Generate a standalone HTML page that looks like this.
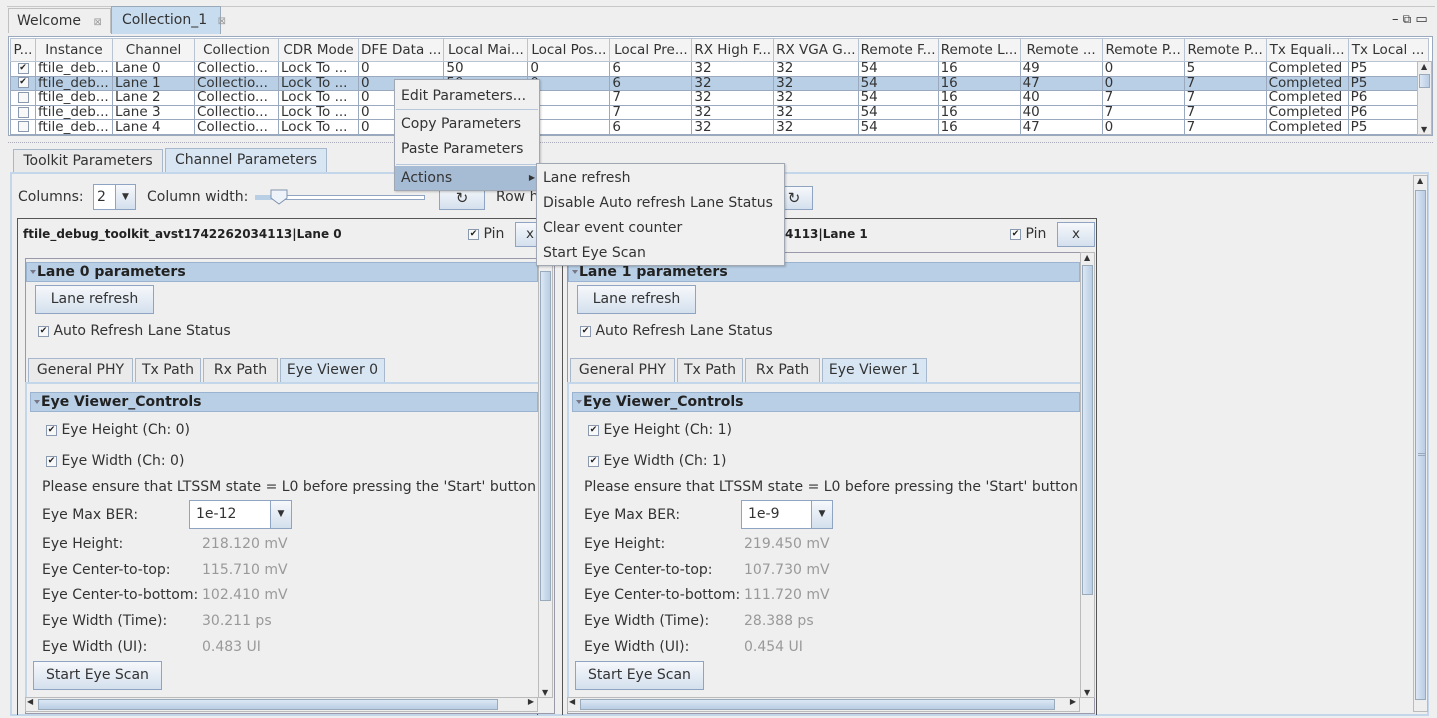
<!DOCTYPE html>
<html><head><meta charset="utf-8"><style>
*{box-sizing:border-box}
body{margin:0;width:1437px;height:718px;background:#efefef;font-family:"DejaVu Sans","Liberation Sans",sans-serif;font-size:13.5px;color:#333;position:relative;overflow:hidden}
.a{position:absolute;white-space:nowrap}
table{border-collapse:collapse;table-layout:fixed;font-size:13.5px}
td{border:1px solid #9aa9bd;padding:0 2px;height:14.6px;line-height:13px;overflow:hidden;white-space:nowrap;background:#fff;color:#333}
th{border:1px solid #b8c4d2;font-weight:normal;height:23px;background:#f4f4f4;overflow:hidden;white-space:nowrap;padding:0 2px}
tr.s td{background:#b8cfe6}
.cb{display:inline-block;width:11px;height:11px;border:1px solid #8a99ad;background:#f8f8f8;font-size:9px;line-height:9px;text-align:center;vertical-align:middle;color:#222}
.btn{position:absolute;border:1px solid #8ea4c2;background:linear-gradient(#f6f8fb,#d4e0ee);text-align:center;color:#333}
.bar{position:absolute;background:#b8cfe6;border:1px solid #9ab3d0;font-weight:bold;color:#222;padding-left:10px;line-height:18px}
.bar:before{content:"";position:absolute;left:3px;top:7px;border:3px solid transparent;border-top:4px solid #778}
.tab{position:absolute;border:1px solid #a8b8cc;border-bottom:none;background:#eaeaea;text-align:center;line-height:22px}
.tab.on{background:#d8e6f4}
.vs{position:absolute;width:15px;background:#eee;border:1px solid #bbb}
.thumb{position:absolute;left:1px;right:1px;background:linear-gradient(90deg,#dce7f4,#b9cde4);border:1px solid #9ab}
.lbl{position:absolute;white-space:nowrap}
.g{color:#999}
.menu{position:absolute;background:#f0f0f0;border:1px solid #a0a8b4;box-shadow:1px 1px 2px rgba(0,0,0,.2)}
.mi{position:absolute;left:0;right:0;padding-left:6px;line-height:24px;font-size:14px}
</style></head><body>
<!-- top tabs -->
<div class="a" style="left:7px;top:6px;width:1428px;height:28px;border-top:1px solid #c8c8c8"></div>
<div class="a" style="left:8px;top:8px;width:103px;height:25px;border:1px solid #c0c0c0;border-bottom:none;line-height:24px;padding-left:8px;font-size:14px">Welcome <span style="font-size:10px;color:#999;margin-left:8px">⊠</span></div>
<div class="a" style="left:111px;top:6px;width:110px;height:28px;background:#c8dcef;border:1px solid #9ab;border-bottom:none;line-height:26px;padding-left:10px;font-size:14px">Collection_1 <span style="font-size:10px;color:#999;margin-left:6px">⊠</span></div>
<div class="a" style="left:1392px;top:12px;font-size:13px">– <span style="font-size:12px">⧉</span> ▭</div>
<!-- table -->
<div class="a" style="left:8px;top:36px;width:1425px;height:100px;border:1px solid #9aa9bd;background:#fff;overflow:hidden">
<table style="position:absolute;left:1px;top:1px">
<colgroup><col style="width:25px"><col style="width:77px"><col style="width:82px"><col style="width:84px"><col style="width:80px"><col style="width:80px"><col style="width:84px"><col style="width:82px"><col style="width:82px"><col style="width:81px"><col style="width:81px"><col style="width:80px"><col style="width:82px"><col style="width:82px"><col style="width:82px"><col style="width:82px"><col style="width:82px"><col style="width:80px"></colgroup>
<tr><th>P...</th><th>Instance</th><th>Channel</th><th>Collection</th><th>CDR Mode</th><th>DFE Data ...</th><th>Local Mai...</th><th>Local Pos...</th><th>Local Pre...</th><th>RX High F...</th><th>RX VGA G...</th><th>Remote F...</th><th>Remote L...</th><th>Remote ...</th><th>Remote P...</th><th>Remote P...</th><th>Tx Equali...</th><th>Tx Local ...</th></tr>
<tr><td style="text-align:center"><span class="cb">✔</span></td><td>ftile_deb...</td><td>Lane 0</td><td>Collectio...</td><td>Lock To ...</td><td>0</td><td>50</td><td>0</td><td>6</td><td>32</td><td>32</td><td>54</td><td>16</td><td>49</td><td>0</td><td>5</td><td>Completed</td><td>P5</td></tr>
<tr class="s"><td style="text-align:center"><span class="cb">✔</span></td><td>ftile_deb...</td><td>Lane 1</td><td>Collectio...</td><td>Lock To ...</td><td>0</td><td>50</td><td>0</td><td>6</td><td>32</td><td>32</td><td>54</td><td>16</td><td>47</td><td>0</td><td>7</td><td>Completed</td><td>P5</td></tr>
<tr><td style="text-align:center"><span class="cb"></span></td><td>ftile_deb...</td><td>Lane 2</td><td>Collectio...</td><td>Lock To ...</td><td>0</td><td>50</td><td>0</td><td>7</td><td>32</td><td>32</td><td>54</td><td>16</td><td>40</td><td>7</td><td>7</td><td>Completed</td><td>P6</td></tr>
<tr><td style="text-align:center"><span class="cb"></span></td><td>ftile_deb...</td><td>Lane 3</td><td>Collectio...</td><td>Lock To ...</td><td>0</td><td>50</td><td>0</td><td>7</td><td>32</td><td>32</td><td>54</td><td>16</td><td>40</td><td>7</td><td>7</td><td>Completed</td><td>P6</td></tr>
<tr><td style="text-align:center"><span class="cb"></span></td><td>ftile_deb...</td><td>Lane 4</td><td>Collectio...</td><td>Lock To ...</td><td>0</td><td>50</td><td>0</td><td>6</td><td>32</td><td>32</td><td>54</td><td>16</td><td>47</td><td>0</td><td>7</td><td>Completed</td><td>P5</td></tr>
</table>
<div class="vs" style="left:1408px;top:24px;height:74px"><div class="a" style="left:3px;top:0;font-size:8px">▲</div><div class="thumb" style="top:12px;height:14px"></div><div class="a" style="left:3px;bottom:0;font-size:8px">▼</div></div>
</div>
<div class="a" style="left:8px;top:142px;width:1425px;border-top:1px dotted #aab"></div>
<!-- lower tabs -->
<div class="tab" style="left:13px;top:149px;width:150px;font-size:14px">Toolkit Parameters</div>
<div class="tab on" style="left:165px;top:148px;width:162px;height:25px;font-size:14px">Channel Parameters</div>
<div class="a" style="left:10px;top:172px;width:1419px;height:544px;border:2px solid #c4d6ea"></div>
<div class="vs" style="left:1413px;top:175px;height:537px"><div class="a" style="left:3px;top:0;font-size:8px">▲</div><div class="thumb" style="top:14px;height:510px"><div class="a" style="left:2px;top:262px;width:8px;border-top:3px double #9ab"></div></div></div>
<div class="lbl" style="left:18px;top:189px;font-size:14px">Columns:</div>
<div class="a" style="left:93px;top:184px;width:43px;height:26px;border:1px solid #8ea4c2;background:#fff"><span style="position:absolute;left:3px;top:4px;font-size:14px">2</span><div class="a" style="left:21px;top:0;width:20px;height:24px;background:linear-gradient(#f6f8fb,#d4e0ee);border-left:1px solid #8ea4c2;text-align:center;font-size:9px;line-height:24px">▼</div></div>
<div class="lbl" style="left:147px;top:189px;font-size:14px">Column width:</div>
<div class="a" style="left:255px;top:195px;width:170px;height:5px;border:1px solid #8ea4c2;background:#fff"></div>
<div class="a" style="left:255px;top:195px;width:20px;height:5px;background:#b8cfe6"></div>
<svg class="a" style="left:270px;top:189px" width="18" height="16"><path d="M1 1H17V9L9 15L1 9Z" fill="#eef3f9" stroke="#8194ae"/></svg>
<div class="btn" style="left:439px;top:186px;width:46px;height:24px;font-size:15px;line-height:22px">↻</div>
<div class="lbl" style="left:496px;top:189px;font-size:14px">Row h</div>
<div class="btn" style="left:775px;top:186px;width:38px;height:24px;font-size:15px;line-height:22px">↻</div>

<!-- card 1 -->
<div class="a" style="left:17px;top:218px;width:521px;height:497px;border:1px solid #555;border-bottom:none"></div>
<div class="lbl" style="left:23px;top:227px;font-size:12px;font-weight:bold;color:#222">ftile_debug_toolkit_avst1742262034113|Lane 0</div>
<div class="lbl" style="left:468px;top:226px;font-size:14px"><span class="cb">✔</span> Pin</div>
<div class="btn" style="left:515px;top:222px;width:30px;height:25px;line-height:23px">x</div>
<div class="a" style="left:25px;top:258px;width:530px;height:456px;border:1px solid #99a;background:#efefef"></div>
<div class="bar" style="left:26px;top:262px;width:512px;height:20px;font-size:14px">Lane 0 parameters</div>
<div class="btn" style="left:35px;top:285px;width:119px;height:29px;line-height:27px;font-size:14px">Lane refresh</div>
<div class="lbl" style="left:38px;top:323px;font-size:14px"><span class="cb">✔</span> Auto Refresh Lane Status</div>
<div class="tab" style="left:28px;top:358px;width:105px;height:24px;font-size:14px">General PHY</div>
<div class="tab" style="left:135px;top:358px;width:66px;height:24px;font-size:14px">Tx Path</div>
<div class="tab" style="left:203px;top:358px;width:75px;height:24px;font-size:14px">Rx Path</div>
<div class="tab on" style="left:280px;top:358px;width:105px;height:25px;font-size:14px">Eye Viewer 0</div>
<div class="a" style="left:25px;top:382px;width:515px;height:315px;border-top:2px solid #c4d6ea;border-left:2px solid #c4d6ea"></div>
<div class="bar" style="left:30px;top:392px;width:508px;height:20px;font-size:14px">Eye Viewer_Controls</div>
<div class="lbl" style="left:46px;top:422px;font-size:14px"><span class="cb">✔</span> Eye Height (Ch: 0)</div>
<div class="lbl" style="left:46px;top:453px;font-size:14px"><span class="cb">✔</span> Eye Width (Ch: 0)</div>
<div class="lbl" style="left:42px;top:479px;font-size:14px;width:496px;overflow:hidden">Please ensure that LTSSM state = L0 before pressing the 'Start' button to</div>
<div class="lbl" style="left:42px;top:507px;font-size:14px">Eye Max BER:</div>
<div class="a" style="left:189px;top:500px;width:103px;height:29px;border:1px solid #8ea4c2;background:#fff"><span style="position:absolute;left:6px;top:5px;font-size:14px">1e-12</span><div class="a" style="left:80px;top:0;width:21px;height:27px;background:linear-gradient(#f6f8fb,#d4e0ee);border-left:1px solid #8ea4c2;text-align:center;font-size:9px;line-height:27px">▼</div></div>
<div class="lbl" style="left:42px;top:536px;font-size:14px">Eye Height:</div><div class="lbl g" style="left:202px;top:536px;font-size:14px">218.120 mV</div>
<div class="lbl" style="left:42px;top:562px;font-size:14px">Eye Center-to-top:</div><div class="lbl g" style="left:202px;top:562px;font-size:14px">115.710 mV</div>
<div class="lbl" style="left:42px;top:587px;font-size:14px">Eye Center-to-bottom:</div><div class="lbl g" style="left:202px;top:587px;font-size:14px">102.410 mV</div>
<div class="lbl" style="left:42px;top:613px;font-size:14px">Eye Width (Time):</div><div class="lbl g" style="left:202px;top:613px;font-size:14px">30.211 ps</div>
<div class="lbl" style="left:42px;top:639px;font-size:14px">Eye Width (UI):</div><div class="lbl g" style="left:202px;top:639px;font-size:14px">0.483 UI</div>
<div class="btn" style="left:33px;top:661px;width:129px;height:29px;line-height:27px;font-size:14px">Start Eye Scan</div>
<div class="vs" style="left:538px;top:258px;height:440px"><div class="thumb" style="top:12px;height:330px"></div><div class="a" style="left:3px;bottom:0;font-size:8px">▼</div></div>
<div class="a" style="left:25px;top:697px;width:513px;height:15px;border:1px solid #bbb;background:#eee"><div class="a" style="left:12px;top:1px;width:460px;height:11px;background:linear-gradient(#dce7f4,#b9cde4);border:1px solid #9ab"></div><div class="a" style="left:1px;top:-1px;font-size:8px">◀</div><div class="a" style="right:3px;top:-1px;font-size:8px">▶</div></div>

<!-- card 2 -->
<div class="a" style="left:562px;top:218px;width:535px;height:497px;border:1px solid #555;border-bottom:none"></div>
<div class="lbl" style="left:785px;top:227px;font-size:12px;font-weight:bold;color:#222">4113|Lane 1</div>
<div class="lbl" style="left:1010px;top:226px;font-size:14px"><span class="cb">✔</span> Pin</div>
<div class="btn" style="left:1057px;top:222px;width:38px;height:25px;line-height:23px">x</div>
<div class="a" style="left:567px;top:252px;width:528px;height:462px;border:1px solid #99a;background:#efefef"></div>
<div class="bar" style="left:568px;top:262px;width:512px;height:20px;font-size:14px">Lane 1 parameters</div>
<div class="btn" style="left:577px;top:285px;width:119px;height:29px;line-height:27px;font-size:14px">Lane refresh</div>
<div class="lbl" style="left:580px;top:323px;font-size:14px"><span class="cb">✔</span> Auto Refresh Lane Status</div>
<div class="tab" style="left:570px;top:358px;width:105px;height:24px;font-size:14px">General PHY</div>
<div class="tab" style="left:677px;top:358px;width:66px;height:24px;font-size:14px">Tx Path</div>
<div class="tab" style="left:745px;top:358px;width:75px;height:24px;font-size:14px">Rx Path</div>
<div class="tab on" style="left:822px;top:358px;width:105px;height:25px;font-size:14px">Eye Viewer 1</div>
<div class="a" style="left:567px;top:382px;width:515px;height:315px;border-top:2px solid #c4d6ea;border-left:2px solid #c4d6ea"></div>
<div class="bar" style="left:572px;top:392px;width:508px;height:20px;font-size:14px">Eye Viewer_Controls</div>
<div class="lbl" style="left:588px;top:422px;font-size:14px"><span class="cb">✔</span> Eye Height (Ch: 1)</div>
<div class="lbl" style="left:588px;top:453px;font-size:14px"><span class="cb">✔</span> Eye Width (Ch: 1)</div>
<div class="lbl" style="left:584px;top:479px;font-size:14px;width:496px;overflow:hidden">Please ensure that LTSSM state = L0 before pressing the 'Start' button to</div>
<div class="lbl" style="left:584px;top:507px;font-size:14px">Eye Max BER:</div>
<div class="a" style="left:741px;top:500px;width:92px;height:29px;border:1px solid #8ea4c2;background:#fff"><span style="position:absolute;left:6px;top:5px;font-size:14px">1e-9</span><div class="a" style="left:69px;top:0;width:21px;height:27px;background:linear-gradient(#f6f8fb,#d4e0ee);border-left:1px solid #8ea4c2;text-align:center;font-size:9px;line-height:27px">▼</div></div>
<div class="lbl" style="left:584px;top:536px;font-size:14px">Eye Height:</div><div class="lbl g" style="left:744px;top:536px;font-size:14px">219.450 mV</div>
<div class="lbl" style="left:584px;top:562px;font-size:14px">Eye Center-to-top:</div><div class="lbl g" style="left:744px;top:562px;font-size:14px">107.730 mV</div>
<div class="lbl" style="left:584px;top:587px;font-size:14px">Eye Center-to-bottom:</div><div class="lbl g" style="left:744px;top:587px;font-size:14px">111.720 mV</div>
<div class="lbl" style="left:584px;top:613px;font-size:14px">Eye Width (Time):</div><div class="lbl g" style="left:744px;top:613px;font-size:14px">28.388 ps</div>
<div class="lbl" style="left:584px;top:639px;font-size:14px">Eye Width (UI):</div><div class="lbl g" style="left:744px;top:639px;font-size:14px">0.454 UI</div>
<div class="btn" style="left:575px;top:661px;width:129px;height:29px;line-height:27px;font-size:14px">Start Eye Scan</div>
<div class="vs" style="left:1080px;top:252px;height:446px"><div class="a" style="left:3px;top:0;font-size:8px">▲</div><div class="thumb" style="top:12px;height:330px"></div><div class="a" style="left:3px;bottom:0;font-size:8px">▼</div></div>
<div class="a" style="left:567px;top:697px;width:513px;height:15px;border:1px solid #bbb;background:#eee"><div class="a" style="left:12px;top:1px;width:475px;height:11px;background:linear-gradient(#dce7f4,#b9cde4);border:1px solid #9ab"></div><div class="a" style="left:1px;top:-1px;font-size:8px">◀</div><div class="a" style="right:3px;top:-1px;font-size:8px">▶</div></div>

<!-- context menu -->
<div class="menu" style="left:394px;top:79px;width:146px;height:112px">
<div class="mi" style="top:4px">Edit Parameters...</div>
<div class="a" style="left:1px;right:1px;top:29px;border-top:1px solid #b8c8dc"></div>
<div class="mi" style="top:32px">Copy Parameters</div>
<div class="mi" style="top:57px">Paste Parameters</div>
<div class="a" style="left:1px;right:1px;top:84px;border-top:1px solid #b8c8dc"></div>
<div class="mi" style="top:86px;height:24px;background:#a6bcd4">Actions<span style="position:absolute;right:4px;font-size:8px">▶</span></div>
</div>
<div class="menu" style="left:536px;top:163px;width:249px;height:103px">
<div class="mi" style="top:2px">Lane refresh</div>
<div class="mi" style="top:27px">Disable Auto refresh Lane Status</div>
<div class="mi" style="top:52px">Clear event counter</div>
<div class="mi" style="top:77px">Start Eye Scan</div>
</div>
</body></html>
